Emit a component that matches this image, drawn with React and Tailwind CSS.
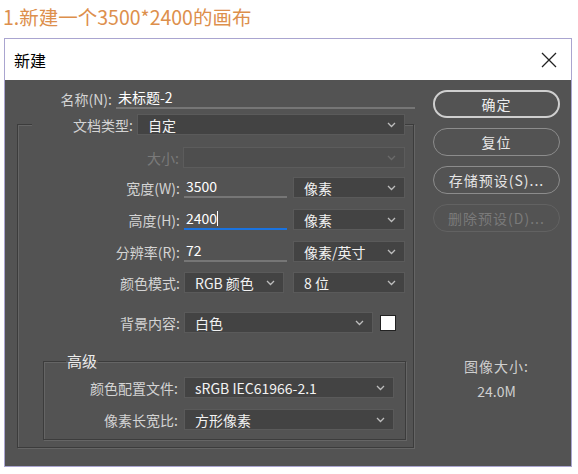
import React from "react";

const font = { fontFamily: '"Noto Sans CJK SC", "Noto Sans", sans-serif' };

const Chevron = ({ dim }) => (
  <svg width="9" height="6" viewBox="0 0 9 6" className="shrink-0">
    <path
      d="M1 1 L4.5 4.5 L8 1"
      fill="none"
      stroke={dim ? "#6a6a6a" : "#bdbdbd"}
      strokeWidth="1.3"
    />
  </svg>
);

const Select = ({ value, width, disabled }) => (
  <div
    className={`h-[21px] flex items-center justify-between pl-[10px] pr-[8px] border ${
      disabled
        ? "bg-[#4e4e4e] border-[#5c5c5c]"
        : "bg-[#434343] border-[#5a5a5a]"
    }`}
    style={{ width }}
  >
    <span className="text-[14px] leading-none text-[#f2f2f2]">{value}</span>
    <Chevron dim={disabled} />
  </div>
);

const Field = ({ value, width, active }) => (
  <div
    className={`h-[21px] flex items-end pb-[1px] pl-[2px] text-[14px] leading-none text-white ${
      active ? "border-b-2 border-[#1a73e0]" : "border-b-2 border-[#767676]"
    }`}
    style={{ width }}
  >
    <span className="mb-[2px]">{value}</span>
    {active && <span className="w-px h-[15px] bg-white mb-[1px]" />}
  </div>
);

const Row = ({ label, labelW, gap = 4, mt, muted, children }) => (
  <div className="flex items-center" style={{ marginTop: mt }}>
    <div
      className={`text-right text-[14px] leading-none ${
        muted ? "text-[#7a7a7a]" : "text-[#d4d4d4]"
      }`}
      style={{ width: labelW, marginRight: gap }}
    >
      {label}
    </div>
    {children}
  </div>
);

const Btn = ({ children, primary, disabled }) => (
  <div
    className={`h-[28px] w-[127px] rounded-full flex items-center justify-center text-[14px] tracking-[1px] ${
      primary
        ? "border-2 border-[#cfcfcf] text-[#ececec]"
        : disabled
        ? "border border-[#626262] text-[#7a7a7a]"
        : "border-[1.5px] border-[#8c8c8c] text-[#e6e6e6]"
    }`}
  >
    {children}
  </div>
);

const frame =
  "border border-[#3c3c3c] shadow-[inset_1px_1px_0_#656565,1px_1px_0_#656565]";

export default function App() {
  return (
    <div className="w-[578px] h-[474px] bg-white overflow-hidden" style={font}>
      <div className="h-[38px] pl-[3px] pt-[2px] text-[19.5px] leading-[30px] text-[#dd8f4c]">
        1.新建一个3500*2400的画布
      </div>

      <div className="ml-[4px] w-[568px] h-[429px] border border-[#aaa5d0] flex flex-col">
        <div className="h-[41px] bg-white flex items-center justify-between pl-[9px] pr-[14px]">
          <span className="text-[16px] text-black">新建</span>
          <svg width="16" height="16" viewBox="0 0 16 16">
            <path d="M1 1 L15 15 M15 1 L1 15" stroke="#222" strokeWidth="1.3" />
          </svg>
        </div>

        <div className="flex-1 bg-[#535353] flex">
          {/* left side */}
          <div className="w-[428px] pt-[8px]">
            <Row label="名称(N):" labelW={107}>
              <Field value="未标题-2" width={299} />
            </Row>

            <fieldset className={`ml-[12px] mt-[5px] w-[397px] ${frame}`}>
              <legend className="ml-[14px] bg-[#535353]">
                <Row label="文档类型:" labelW={101}>
                  <Select value="自定" width={268} />
                </Row>
              </legend>

              <Row label="大小:" labelW={161} muted mt={12}>
                <Select value="" width={222} disabled />
              </Row>
              <Row label="宽度(W):" labelW={162} mt={9}>
                <Field value="3500" width={103} />
                <div className="ml-[6px]">
                  <Select value="像素" width={112} />
                </div>
              </Row>
              <Row label="高度(H):" labelW={162} mt={11}>
                <Field value="2400" width={103} active />
                <div className="ml-[6px]">
                  <Select value="像素" width={112} />
                </div>
              </Row>
              <Row label="分辨率(R):" labelW={162} mt={11}>
                <Field value="72" width={103} />
                <div className="ml-[6px]">
                  <Select value="像素/英寸" width={112} />
                </div>
              </Row>
              <Row label="颜色模式:" labelW={162} mt={10}>
                <Select value="RGB 颜色" width={100} />
                <div className="ml-[9px]">
                  <Select value="8 位" width={112} />
                </div>
              </Row>
              <Row label="背景内容:" labelW={162} mt={19}>
                <Select value="白色" width={189} />
                <div className="ml-[7px] w-[16px] h-[16px] bg-white border border-[#222]" />
              </Row>

              <fieldset className={`ml-[25px] mt-[18px] mb-[7px] w-[363px] pb-[9px] ${frame}`}>
                <legend className="ml-[22px] px-[1px] text-[15px] leading-[20px] text-[#ececec]">
                  高级
                </legend>
                <Row label="颜色配置文件:" labelW={134} gap={6} mt={6}>
                  <Select value="sRGB IEC61966-2.1" width={210} />
                </Row>
                <Row label="像素长宽比:" labelW={134} gap={6} mt={11}>
                  <Select value="方形像素" width={210} />
                </Row>
              </fieldset>
            </fieldset>
          </div>

          {/* right side */}
          <div className="w-[127px] pt-[10px] flex flex-col gap-[10px]">
            <Btn primary>确定</Btn>
            <Btn>复位</Btn>
            <Btn>存储预设(S)...</Btn>
            <Btn disabled>删除预设(D)...</Btn>
            <div className="mt-[112px] flex flex-col items-center text-[14px] text-[#cfcfcf] leading-[25px]">
              <span className="tracking-[1px]">图像大小:</span>
              <span>24.0M</span>
            </div>
          </div>
        </div>
      </div>
    </div>
  );
}
